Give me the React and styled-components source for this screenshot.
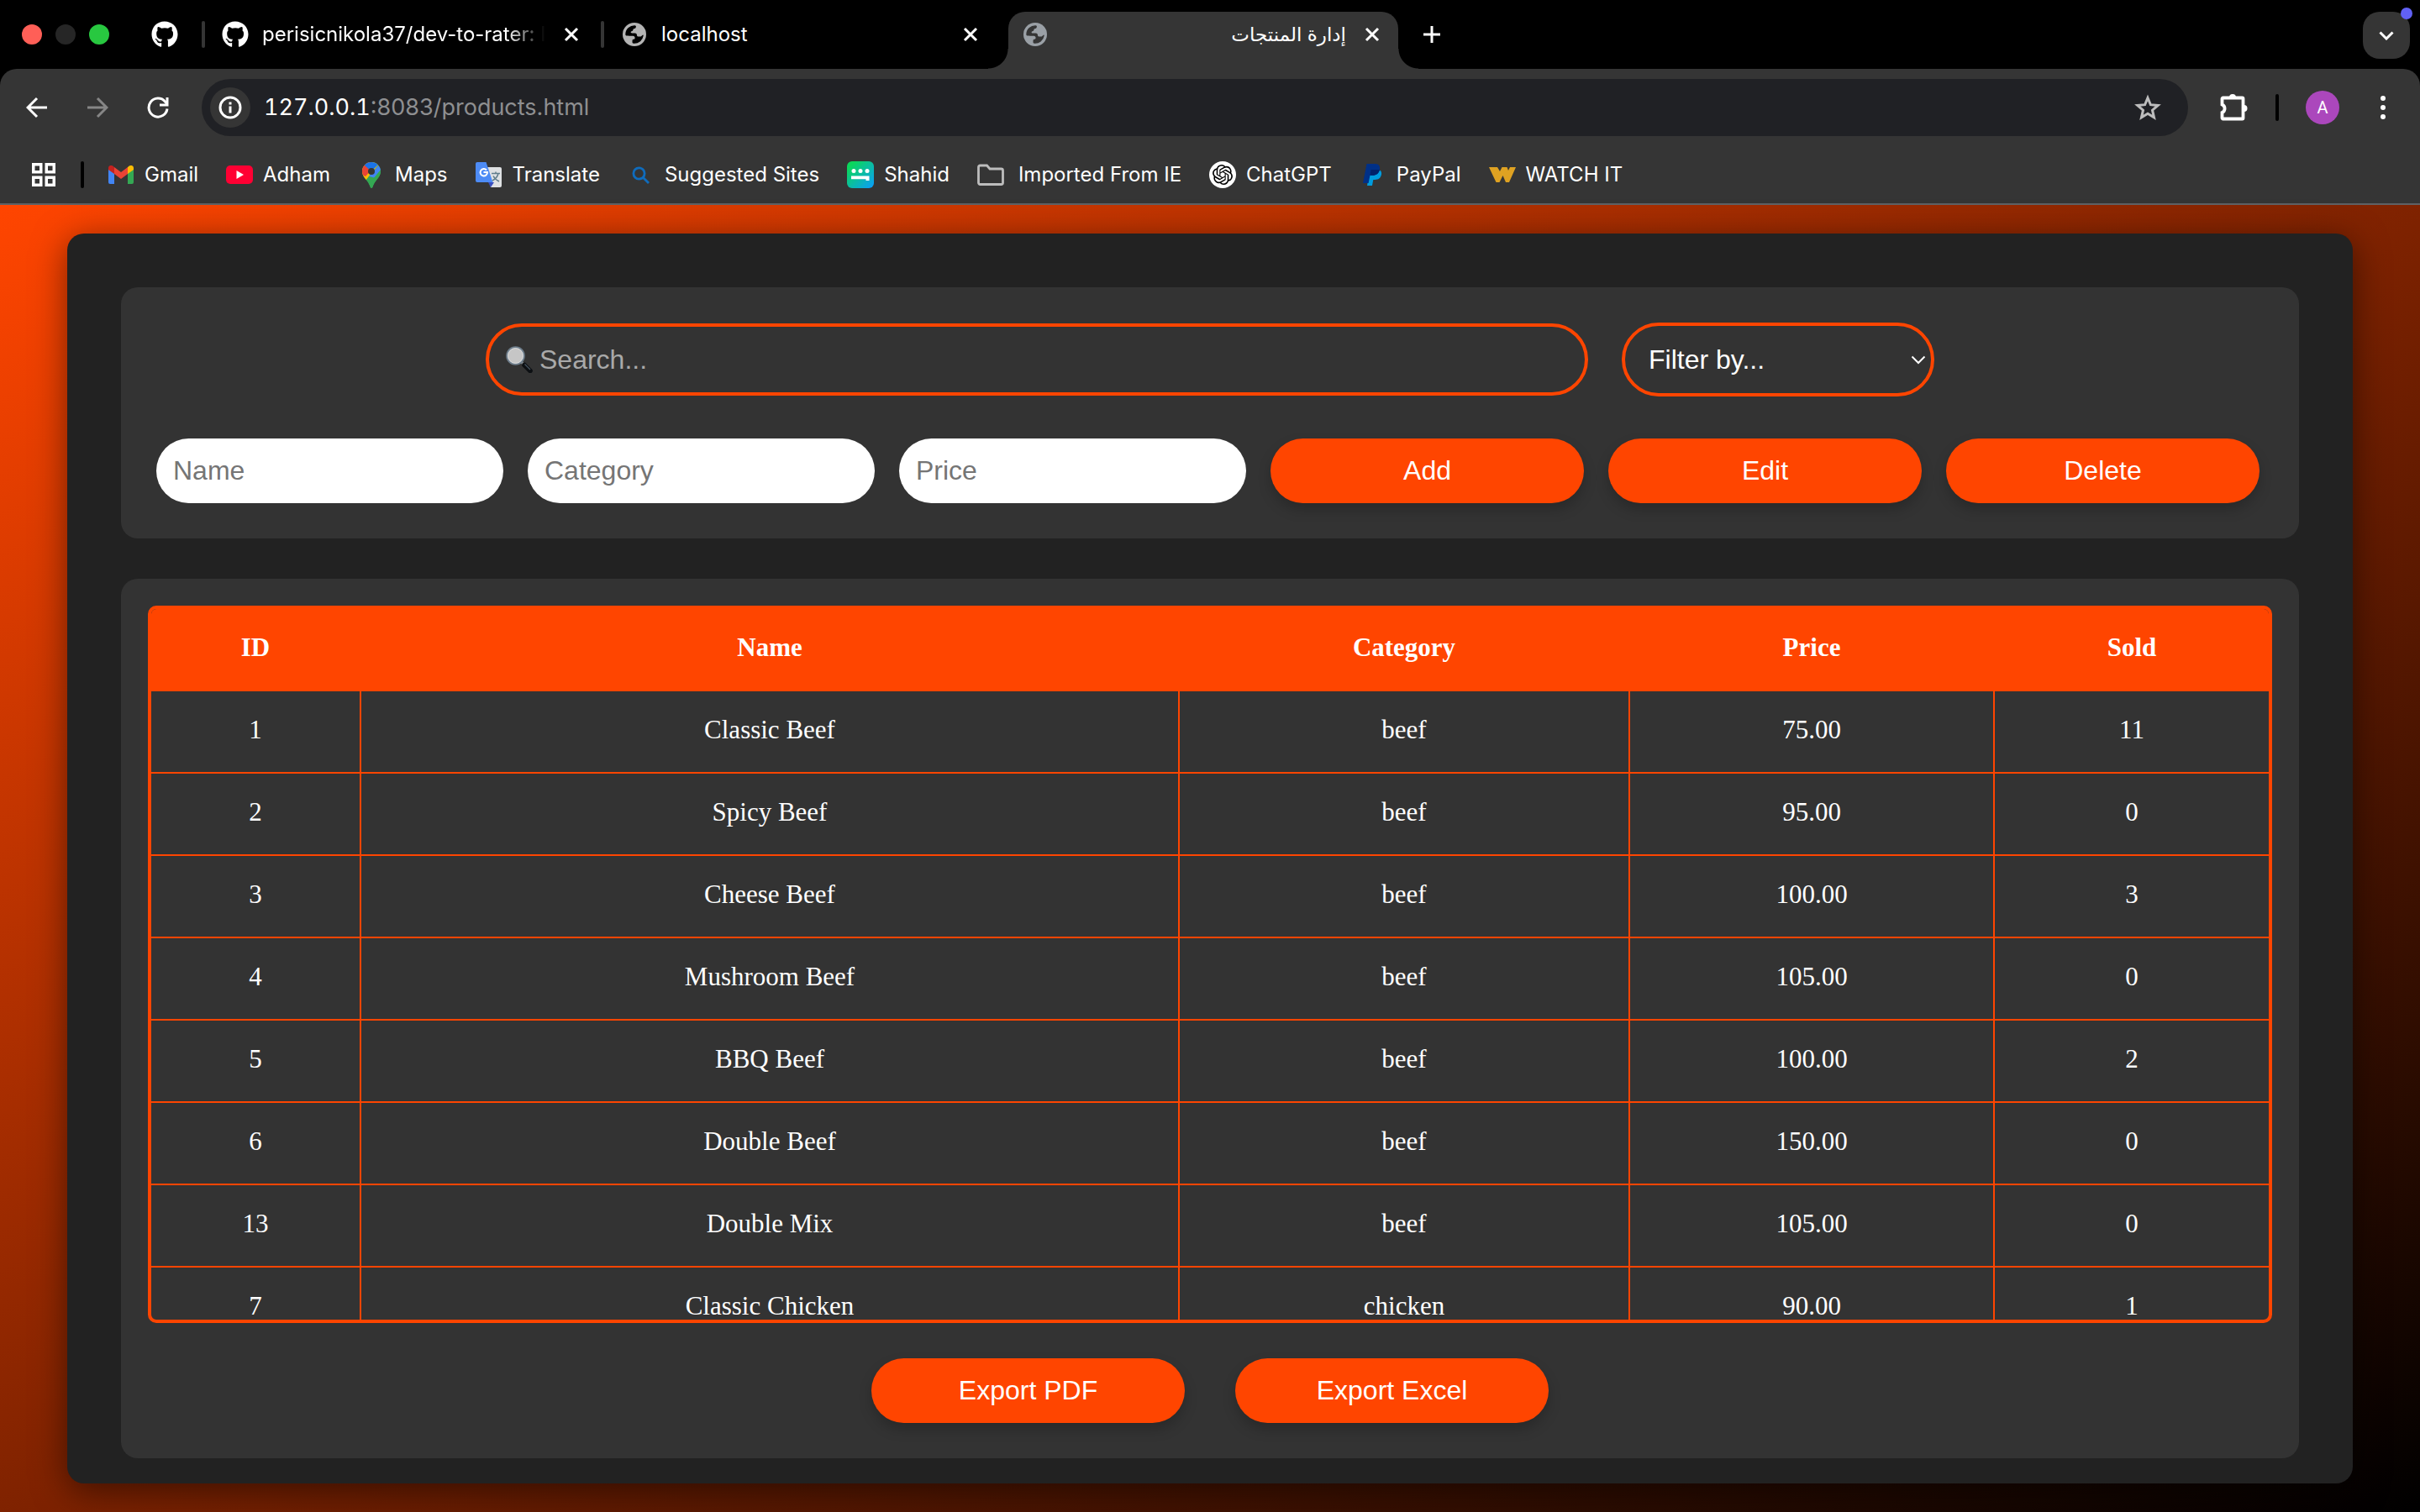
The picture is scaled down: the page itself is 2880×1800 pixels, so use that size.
import React from "react";
import styled, { createGlobalStyle, css } from "styled-components";
import { FaGithub } from "react-icons/fa";
import { SiOpenai } from "react-icons/si";

const ORANGE = "#ff4500";
const UI_FONT = `Inter, Roboto, "Noto Sans", "DejaVu Sans", sans-serif`;
const FORM_FONT = `"Liberation Sans", Arial, sans-serif`;
const TABLE_FONT = `"Liberation Serif", "Times New Roman", serif`;

const GlobalStyle = createGlobalStyle`
  * { box-sizing: border-box; }
  html, body, #root { height: 100%; }
  body { margin: 0; background: #000; overflow: hidden; }
  button, input, select { font: inherit; margin: 0; }
`;

const Window = styled.div`
  display: flex;
  flex-direction: column;
  min-height: 100vh;
  color: #fff;
  font-family: ${UI_FONT};
`;

/* ---------- Tab strip ---------- */

const TabStrip = styled.header`
  display: flex;
  align-items: stretch;
  height: 82px;
  background: #000;
`;

const Lights = styled.div`
  display: flex;
  align-items: center;
  gap: 16px;
  width: 152px;
  padding-left: 26px;
`;

const Light = styled.span`
  width: 24px;
  height: 24px;
  border-radius: 50%;
  background: ${(p) => p.$color};
`;

const PinnedTab = styled.div`
  display: flex;
  align-items: center;
  justify-content: center;
  width: 88px;
`;

const Divider = styled.span`
  flex: none;
  align-self: center;
  width: 4px;
  height: 32px;
  border-radius: 2px;
  background: ${(p) => p.$color || "#000"};
`;

const Tab = styled.div`
  display: flex;
  align-items: center;
  gap: 16px;
  width: 471px;
  padding: 0 20px;
  ${(p) =>
    p.$active &&
    css`
      position: relative;
      width: 464px;
      margin: 14px 0 0 10px;
      padding: 0 16px 14px;
      border-radius: 20px 20px 0 0;
      background: #353535;
      &::before,
      &::after {
        content: "";
        position: absolute;
        bottom: 0;
        width: 24px;
        height: 24px;
      }
      &::before {
        right: 100%;
        background: radial-gradient(circle at 0 0, #000 23px, #353535 24px);
      }
      &::after {
        left: 100%;
        background: radial-gradient(circle at 100% 0, #000 23px, #353535 24px);
      }
    `}
`;

const TabIcon = styled.span`
  display: flex;
  flex: none;
  align-items: center;
  justify-content: center;
  width: 32px;
  height: 32px;
  color: ${(p) => p.$color || "#fff"};
`;

const TabTitle = styled.span`
  flex: 1;
  min-width: 0;
  overflow: hidden;
  white-space: nowrap;
  font-size: 24px;
  line-height: 32px;
  &:lang(ar) {
    font-size: 23px;
  }
  ${(p) =>
    p.$fade &&
    css`
      mask-image: linear-gradient(to right, #000 86%, transparent 100%);
    `}
`;

const GhostButton = styled.button`
  display: flex;
  flex: none;
  align-items: center;
  justify-content: center;
  align-self: center;
  width: ${(p) => p.$size}px;
  height: ${(p) => p.$size}px;
  padding: 0;
  border: 0;
  border-radius: 50%;
  background: ${(p) => p.$bg || "transparent"};
  color: ${(p) => p.$color || "#fff"};
`;

const NewTab = styled(GhostButton)`
  margin-left: 24px;
`;

const TabSearch = styled.button`
  position: relative;
  display: flex;
  align-items: center;
  justify-content: center;
  width: 56px;
  height: 56px;
  margin: 14px 12px 0 auto;
  padding: 0;
  border: 0;
  border-radius: 20px;
  background: #353535;
  color: #fff;
  &::after {
    content: "";
    position: absolute;
    top: -5px;
    right: -3px;
    width: 14px;
    height: 14px;
    border-radius: 50%;
    background: #6161f5;
  }
`;

/* ---------- Toolbar ---------- */

const ToolbarBack = styled.div`
  background: #000;
`;

const Chrome = styled.div`
  border-bottom: 2px solid #5f6164;
  border-radius: 20px 20px 0 0;
  background: #353535;
`;

const Toolbar = styled.div`
  display: flex;
  align-items: center;
  height: 80px;
  padding: 12px 20px 0;
`;

const NavGroup = styled.nav`
  display: flex;
  gap: 24px;
  margin-right: 28px;
`;

const AddressBar = styled.div`
  display: flex;
  flex: 1;
  align-items: center;
  height: 68px;
  padding: 0 24px 0 10px;
  border-radius: 34px;
  background: #202125;
`;

const Address = styled.div`
  flex: 1;
  padding-left: 16px;
  color: #8e8f91;
  font-size: 27px;
  line-height: 36px;
`;

const Host = styled.span`
  color: #fff;
  font-variant-numeric: tabular-nums;
`;

const ToolGroup = styled.div`
  display: flex;
  align-items: center;
  margin-left: 30px;
`;

const Avatar = styled.button`
  width: 40px;
  height: 40px;
  margin: 0 28px 0 32px;
  padding: 0;
  border: 0;
  border-radius: 50%;
  background: #ab47bc;
  color: #fff;
  font-family: Roboto, sans-serif;
  font-size: 20px;
`;

const ToolDivider = styled(Divider)`
  margin-left: 26px;
`;

/* ---------- Bookmarks ---------- */

const Bookmarks = styled.nav`
  display: flex;
  align-items: center;
  height: 80px;
  padding: 12px 28px 0;
`;

const BookmarkDivider = styled(Divider)`
  margin: 0 28px 0 20px;
`;

const BookmarkList = styled.div`
  display: flex;
  gap: 33px;
`;

const Bookmark = styled.a`
  display: flex;
  align-items: center;
  gap: ${(p) => (p.$folder ? 17 : 12)}px;
  color: #fff;
  font-size: 24px;
  line-height: 32px;
  text-decoration: none;
  white-space: nowrap;
`;

const BookmarkIcon = styled.span`
  display: flex;
  flex: none;
  align-items: center;
  justify-content: center;
  width: 32px;
  height: 32px;
  border-radius: 50%;
  background: ${(p) => p.$bg || "none"};
  color: #000;
`;

/* ---------- Page ---------- */

const Page = styled.main`
  flex: 1;
  padding: 34px 80px;
  background: linear-gradient(to bottom right, ${ORANGE}, #000);
`;

const Container = styled.div`
  display: flex;
  flex-direction: column;
  gap: 48px;
  padding: 64px 64px 30px;
  border-radius: 20px;
  background: #222;
  box-shadow: 0 8px 40px rgba(0, 0, 0, 0.5);
`;

const Card = styled.section`
  padding: ${(p) => p.$pad};
  border-radius: 20px;
  background: #333;
`;

const SearchRow = styled.div`
  display: flex;
  align-items: center;
  justify-content: center;
  gap: 40px;
  margin-bottom: 50px;
`;

const SearchBox = styled.label`
  display: flex;
  flex: 0 1 1312px;
  align-items: center;
  gap: 8px;
  height: 86px;
  padding: 0 20px;
  border: 4px solid ${ORANGE};
  border-radius: 44px;
`;

const SearchInput = styled.input`
  flex: 1;
  min-width: 0;
  padding: 0;
  border: 0;
  outline: 0;
  background: transparent;
  color: #fff;
  font-family: ${FORM_FONT};
  font-size: 32px;
  &::placeholder {
    color: #a9a9a9;
    opacity: 1;
  }
`;

const SelectWrap = styled.div`
  display: grid;
  flex: 0 0 372px;
  align-items: center;
  & > * {
    grid-area: 1 / 1;
  }
  & > svg {
    justify-self: end;
    margin-right: 10px;
    pointer-events: none;
  }
`;

const Select = styled.select`
  appearance: none;
  width: 100%;
  height: 88px;
  padding: 0 28px;
  border: 4px solid ${ORANGE};
  border-radius: 44px;
  background: #333;
  color: #fff;
  font-family: ${FORM_FONT};
  font-size: 32px;
`;

const FormRow = styled.form`
  display: grid;
  grid-template-columns: repeat(3, minmax(0, 413px)) repeat(3, minmax(0, 373px));
  gap: 29px;
`;

const pill = css`
  height: 77px;
  border: 0;
  border-radius: 40px;
  font-family: ${FORM_FONT};
  font-size: 32px;
`;

const Field = styled.input`
  ${pill}
  min-width: 0;
  padding: 0 20px;
  background: #fff;
  color: #000;
  &::placeholder {
    color: #757575;
    opacity: 1;
  }
`;

const Button = styled.button`
  ${pill}
  flex: 0 0 373px;
  padding: 0;
  background: ${ORANGE};
  color: #fff;
  box-shadow: 0 8px 16px rgba(0, 0, 0, 0.2);
`;

const TableWrap = styled.div`
  height: 854px;
  overflow: hidden;
  border: 4px solid ${ORANGE};
  border-radius: 10px;
`;

const Table = styled.table`
  width: 100%;
  table-layout: fixed;
  border-spacing: 0;
  font-family: ${TABLE_FONT};
  font-size: 31px;
  line-height: 36px;
  text-align: center;
`;

const cell = css`
  height: 98px;
  padding: 28px 8px 32px;
  border-right: 2px solid ${ORANGE};
  border-bottom: 2px solid ${ORANGE};
  &:last-child {
    border-right: 0;
  }
`;

const Th = styled.th`
  ${cell}
  background: ${ORANGE};
`;

const Td = styled.td`
  ${cell}
`;

const ExportRow = styled.div`
  display: flex;
  justify-content: center;
  gap: 60px;
  margin-top: 42px;
`;

/* ---------- Icons ---------- */

const CloseIcon = () => (
  <svg width="18" height="18" viewBox="0 0 18 18" fill="none" stroke="currentColor" strokeWidth="3">
    <path d="M2 2l14 14M16 2L2 16" />
  </svg>
);

const GlobeIcon = ({ cut }) => (
  <svg width="28" height="28" viewBox="0 0 28 28">
    <circle cx="14" cy="14" r="14" fill="currentColor" />
    <path
      d="M3.3 13.5A10.8 10.8 0 0 1 14.5 3.2c1 .1 1.6.8 1.4 1.8-.3 1.700-1.400 2-2.700 2.200-.8.2-.6 1.500-1.200 2.200-.7.8-2 .6-2.300 1.500-.3 1 .4 1.600 1.400 1.600h3.600c1.600 0 2.300 1 2.300 2.400 0 1.300 1 1.700 2.100 1.700h1.800c.9 0 1.500-.5 2.200-1.300 1-1.100 1.700-.9 1.600.3A10.800 10.800 0 0 1 13 24.700c-1-.1-1.500-.8-1.500-1.700v-1.600c0-1 .7-1.700 1.700-1.700 1.200 0 1.500-1 1.300-2.100-.2-1.200-1-1.700-2.100-1.800-2.700-.3-6-.2-8-.4-.8-.1-1.100-.9-1.100-1.900z"
      fill={cut}
    />
  </svg>
);

const PlusIcon = () => (
  <svg width="22" height="22" viewBox="0 0 22 22" fill="none" stroke="currentColor" strokeWidth="3">
    <path d="M11 1v20M1 11h20" />
  </svg>
);

const ChevronIcon = ({ width = 18, height = 11, stroke = 3 }) => (
  <svg width={width} height={height} viewBox="0 0 18 11" fill="none" stroke="currentColor" strokeWidth={stroke}>
    <path d="M1.500 1.500L9 9l7.500-7.500" />
  </svg>
);

const ArrowIcon = ({ flip }) => (
  <svg width="26" height="26" viewBox="0 0 26 26" fill="none" stroke="currentColor" strokeWidth="3">
    <path d={flip ? "M1 13h22M13 2l11 11-11 11" : "M25 13H3M13 2L2 13l11 11"} />
  </svg>
);

const ReloadIcon = () => (
  <svg width="26" height="26" viewBox="0 0 26 26" fill="none" stroke="currentColor" strokeWidth="3">
    <path d="M24 14.500A11 11 0 1 1 21.500 6L24 9" />
    <path d="M24 1v9h-9" />
  </svg>
);

const InfoIcon = () => (
  <svg width="28" height="28" viewBox="0 0 28 28" fill="none" stroke="currentColor" strokeWidth="3">
    <circle cx="14" cy="14" r="12" />
    <path d="M14 12.500v8M14 7.500v3" />
  </svg>
);

const StarIcon = () => (
  <svg width="32" height="32" viewBox="0 0 32 32" fill="none" stroke="#bdbdbd" strokeWidth="3">
    <path d="M16 4.500l3.400 8.200 8.800.7-6.700 5.800 2 8.600-7.500-4.500-7.500 4.500 2-8.600-6.700-5.800 8.800-.7z" />
  </svg>
);

const PuzzleIcon = () => (
  <svg width="34" height="34" viewBox="0 0 34 34">
    <path
      d="M4.500 5.500h23a1 1 0 0 1 1 1v23a1 1 0 0 1-1 1h-23a1 1 0 0 1-1-1v-6.500a5.200 5.200 0 0 0 0-9.500v-7a1 1 0 0 1 1-1z"
      fill="none"
      stroke="currentColor"
      strokeWidth="3.800"
    />
    <path d="M12 5a4 4 0 0 1 8 0zM29.500 14a4 4 0 0 1 0 8z" fill="currentColor" />
  </svg>
);

const DotsIcon = () => (
  <svg width="6" height="28" viewBox="0 0 6 28" fill="currentColor">
    <circle cx="3" cy="3" r="3" />
    <circle cx="3" cy="14" r="3" />
    <circle cx="3" cy="25" r="3" />
  </svg>
);

const AppsIcon = () => (
  <svg width="28" height="28" viewBox="0 0 28 28" fill="none" stroke="currentColor" strokeWidth="3.500">
    <path d="M1.750 1.750h9v9h-9zM17.250 1.750h9v9h-9zM1.750 17.250h9v9h-9zM17.250 17.250h9v9h-9z" />
  </svg>
);

const GmailIcon = () => (
  <svg width="30" height="22" viewBox="0 0 30 22">
    <path d="M0 4v16a2 2 0 0 0 2 2h5V9z" fill="#4285f4" />
    <path d="M23 9v13h5a2 2 0 0 0 2-2V4z" fill="#34a853" />
    <path d="M23 2v8l7-5V3c0-2.800-3-4-5.200-2.400z" fill="#fbbc04" />
    <path d="M7 10V2l8 6 8-6v8l-8 6z" fill="#ea4335" />
    <path d="M0 3v2l7 5V2L5.200.6C3-1 0 .2 0 3z" fill="#c5221f" />
  </svg>
);

const YoutubeIcon = () => (
  <svg width="32" height="22" viewBox="0 0 32 22">
    <rect width="32" height="22" rx="5" fill="#ff0033" />
    <path d="M12.500 6v10l8.500-5z" fill="#fff" />
  </svg>
);

const MapsIcon = () => (
  <svg width="22" height="31" viewBox="0 0 22 31">
    <clipPath id="pin">
      <path d="M11 0a11 11 0 0 1 11 11c0 4-2 6.500-4.500 9.700-2.800 3.500-4.200 6-5.200 9.300-.4 1.300-2.200 1.300-2.600 0-1-3.300-2.400-5.800-5.200-9.300C2 17.500 0 15 0 11A11 11 0 0 1 11 0z" />
    </clipPath>
    <g clipPath="url(#pin)">
      <path d="M0 0h22v31H0z" fill="#34a853" />
      <path d="M0 0h22L3 23H0z" fill="#fbbc04" />
      <path d="M0 0h11v9L4 17-2 14z" fill="#ea4335" />
      <path d="M2 3l9 8L20 2 14-2H4z" fill="#1a73e8" />
      <path d="M14-1l8 5v8l-6 7-8-2 12-14z" fill="#4285f4" />
      <path d="M22 9L8 26l4 5h10z" fill="#34a853" />
    </g>
    <circle cx="11" cy="11" r="4" fill="#353535" />
  </svg>
);

const TranslateIcon = () => (
  <svg width="32" height="32" viewBox="0 0 32 32">
    <path d="M11 7h18a2 2 0 0 1 2 2v20a2 2 0 0 1-2 2H18z" fill="#dfe1e3" />
    <path d="M15 25h7l-4 6z" fill="#3a4fbf" />
    <path d="M2 1h10.500l8 24H2a2 2 0 0 1-2-2V3a2 2 0 0 1 2-2z" fill="#4d8bf5" />
    <path d="M13 10.500A4.200 4.200 0 1 0 14 13h-4.500" fill="none" stroke="#fff" strokeWidth="2" />
    <path d="M19 14.500h10M24 12.500v2M27 14.500c-1 4-4 7-7 8.500M21 17.500c1.500 3 4 5 7 6.500" fill="none" stroke="#607d8b" strokeWidth="1.500" />
  </svg>
);

const LookupIcon = () => (
  <svg width="21" height="21" viewBox="0 0 21 21" fill="none" stroke="#0f6cbd" strokeWidth="2.800">
    <circle cx="8.500" cy="8.500" r="6.600" />
    <path d="M13 13l7 7" />
  </svg>
);

const ShahidIcon = () => (
  <svg width="32" height="32" viewBox="0 0 32 32">
    <linearGradient id="shahid" x1="0" y1="0" x2="1" y2="1">
      <stop offset="0.150" stopColor="#0bd65c" />
      <stop offset="1" stopColor="#0a9cff" />
    </linearGradient>
    <rect width="32" height="32" rx="6" fill="url(#shahid)" />
    <path d="M5 17.500h21.500V23h-4v-1.800H5z" fill="#fff" />
    <circle cx="8" cy="11.500" r="2.500" fill="#fff" />
    <circle cx="16" cy="11.500" r="2.500" fill="#fff" />
    <circle cx="24" cy="11.500" r="2.500" fill="#fff" />
  </svg>
);

const FolderIcon = () => (
  <svg width="32" height="26" viewBox="0 0 32 26" fill="none" stroke="#bdbdbd" strokeWidth="2.800">
    <path d="M3.500 2h8l3.500 4h13.500a2 2 0 0 1 2 2v14.500a2 2 0 0 1-2 2h-25a2 2 0 0 1-2-2V4a2 2 0 0 1 2-2z" />
  </svg>
);

const PaypalIcon = () => (
  <svg width="24" height="26" viewBox="0 0 24 26">
    <path d="M8 7h10c3.500.500 4.500 3 4 5.800-.900 4.400-3.700 6.200-7.700 6.200h-2L11 26H5z" fill="#009cde" />
    <path d="M4.500 0h9.800c4.500 0 6.500 2.800 5.600 6.900-1 4.600-4.200 6.800-8.700 6.800H8.500L6.600 23H0z" fill="#003087" />
    <path d="M9.500 7h8.800c.700 0 1.300.100 1.600.200-1 4.400-4.200 6.500-8.700 6.500H8.500z" fill="#012169" />
  </svg>
);

const WatchItIcon = () => (
  <svg width="32" height="18" viewBox="0 0 32 18" fill="#dfa222">
    <path d="M0 0h10l3 5 2.500-5h6l1.500 4 2-4h7l-8 18h-4l-3.500-8-4 8H8.500z" />
  </svg>
);

const MagnifierIcon = () => (
  <svg width="32" height="32" viewBox="0 0 32 32">
    <path d="M19 19.500l3 3" stroke="#8a8f94" strokeWidth="3" />
    <path d="M22 22.500l7 7" stroke="#0c0f12" strokeWidth="5.500" strokeLinecap="round" />
    <path d="M22.500 21.500l6.500 6.500" stroke="#46535e" strokeWidth="1.200" />
    <circle cx="11.500" cy="11.500" r="10.300" fill="#c6c6c6" stroke="#6f7f8d" strokeWidth="2" />
    <circle cx="11.500" cy="11.500" r="9" fill="none" stroke="#e4e4e4" strokeWidth="0.800" />
  </svg>
);

/* ---------- Data ---------- */

const bookmarks = [
  { label: "Gmail", icon: <GmailIcon /> },
  { label: "Adham", icon: <YoutubeIcon /> },
  { label: "Maps", icon: <MapsIcon /> },
  { label: "Translate", icon: <TranslateIcon /> },
  { label: "Suggested Sites", icon: <LookupIcon /> },
  { label: "Shahid", icon: <ShahidIcon /> },
  { label: "Imported From IE", icon: <FolderIcon />, folder: true },
  { label: "ChatGPT", icon: <SiOpenai size={24} />, bg: "#fff" },
  { label: "PayPal", icon: <PaypalIcon /> },
  { label: "WATCH IT", icon: <WatchItIcon /> },
];

const columns = [
  { label: "ID", width: 250 },
  { label: "Name", width: 974 },
  { label: "Category", width: 536 },
  { label: "Price", width: 434 },
  { label: "Sold", width: 326 },
];

const products = [
  ["1", "Classic Beef", "beef", "75.00", "11"],
  ["2", "Spicy Beef", "beef", "95.00", "0"],
  ["3", "Cheese Beef", "beef", "100.00", "3"],
  ["4", "Mushroom Beef", "beef", "105.00", "0"],
  ["5", "BBQ Beef", "beef", "100.00", "2"],
  ["6", "Double Beef", "beef", "150.00", "0"],
  ["13", "Double Mix", "beef", "105.00", "0"],
  ["7", "Classic Chicken", "chicken", "90.00", "1"],
];

const Col = styled.col`
  width: ${(p) => p.$width}px;
`;

export default function App() {
  return (
    <Window>
      <GlobalStyle />
      <TabStrip>
        <Lights>
          <Light $color="#ff5f57" />
          <Light $color="#262626" />
          <Light $color="#28c840" />
        </Lights>
        <PinnedTab>
          <FaGithub size={32} />
        </PinnedTab>
        <Divider $color="#353535" />
        <Tab>
          <TabIcon>
            <FaGithub size={32} />
          </TabIcon>
          <TabTitle $fade>perisicnikola37/dev-to-rater: I</TabTitle>
          <GhostButton $size={30} aria-label="Close tab">
            <CloseIcon />
          </GhostButton>
        </Tab>
        <Divider $color="#353535" />
        <Tab>
          <TabIcon $color="#b4b4b4">
            <GlobeIcon cut="#000" />
          </TabIcon>
          <TabTitle>localhost</TabTitle>
          <GhostButton $size={30} aria-label="Close tab">
            <CloseIcon />
          </GhostButton>
        </Tab>
        <Tab $active>
          <TabIcon $color="#9aa0a6">
            <GlobeIcon cut="#353535" />
          </TabIcon>
          <TabTitle dir="rtl" lang="ar">
            إدارة المنتجات
          </TabTitle>
          <GhostButton $size={30} aria-label="Close tab">
            <CloseIcon />
          </GhostButton>
        </Tab>
        <NewTab $size={32} aria-label="New tab">
          <PlusIcon />
        </NewTab>
        <TabSearch aria-label="Search tabs">
          <ChevronIcon />
        </TabSearch>
      </TabStrip>

      <ToolbarBack>
        <Chrome>
          <Toolbar>
            <NavGroup>
              <GhostButton $size={48} aria-label="Back">
                <ArrowIcon />
              </GhostButton>
              <GhostButton $size={48} $color="#868686" aria-label="Forward">
                <ArrowIcon flip />
              </GhostButton>
              <GhostButton $size={48} aria-label="Reload">
                <ReloadIcon />
              </GhostButton>
            </NavGroup>
            <AddressBar>
              <GhostButton $size={48} $bg="#353535" aria-label="Site information">
                <InfoIcon />
              </GhostButton>
              <Address>
                <Host>127.0.0.1</Host>:8083/products.html
              </Address>
              <GhostButton $size={48} aria-label="Bookmark this page">
                <StarIcon />
              </GhostButton>
            </AddressBar>
            <ToolGroup>
              <GhostButton $size={48} aria-label="Extensions">
                <PuzzleIcon />
              </GhostButton>
              <ToolDivider />
              <Avatar>A</Avatar>
              <GhostButton $size={48} aria-label="Menu">
                <DotsIcon />
              </GhostButton>
            </ToolGroup>
          </Toolbar>
          <Bookmarks>
            <GhostButton $size={48} aria-label="Apps">
              <AppsIcon />
            </GhostButton>
            <BookmarkDivider />
            <BookmarkList>
              {bookmarks.map((b) => (
                <Bookmark key={b.label} href="#" $folder={b.folder}>
                  <BookmarkIcon $bg={b.bg}>{b.icon}</BookmarkIcon>
                  {b.label}
                </Bookmark>
              ))}
            </BookmarkList>
          </Bookmarks>
        </Chrome>
      </ToolbarBack>

      <Page>
        <Container>
          <Card $pad="42px">
            <SearchRow>
              <SearchBox>
                <MagnifierIcon />
                <SearchInput type="text" placeholder="Search..." aria-label="Search" />
              </SearchBox>
              <SelectWrap>
                <Select aria-label="Filter by" defaultValue="">
                  <option value="">Filter by...</option>
                </Select>
                <ChevronIcon stroke={2} />
              </SelectWrap>
            </SearchRow>
            <FormRow onSubmit={(e) => e.preventDefault()}>
              <Field placeholder="Name" aria-label="Name" />
              <Field placeholder="Category" aria-label="Category" />
              <Field placeholder="Price" aria-label="Price" />
              <Button type="button">Add</Button>
              <Button type="button">Edit</Button>
              <Button type="button">Delete</Button>
            </FormRow>
          </Card>
          <Card $pad="32px 32px 42px">
            <TableWrap>
              <Table>
                <colgroup>
                  {columns.map((c) => (
                    <Col key={c.label} $width={c.width} />
                  ))}
                </colgroup>
                <thead>
                  <tr>
                    {columns.map((c) => (
                      <Th key={c.label}>{c.label}</Th>
                    ))}
                  </tr>
                </thead>
                <tbody>
                  {products.map((row) => (
                    <tr key={row[0]}>
                      {row.map((value, i) => (
                        <Td key={columns[i].label}>{value}</Td>
                      ))}
                    </tr>
                  ))}
                </tbody>
              </Table>
            </TableWrap>
            <ExportRow>
              <Button type="button">Export PDF</Button>
              <Button type="button">Export Excel</Button>
            </ExportRow>
          </Card>
        </Container>
      </Page>
    </Window>
  );
}
